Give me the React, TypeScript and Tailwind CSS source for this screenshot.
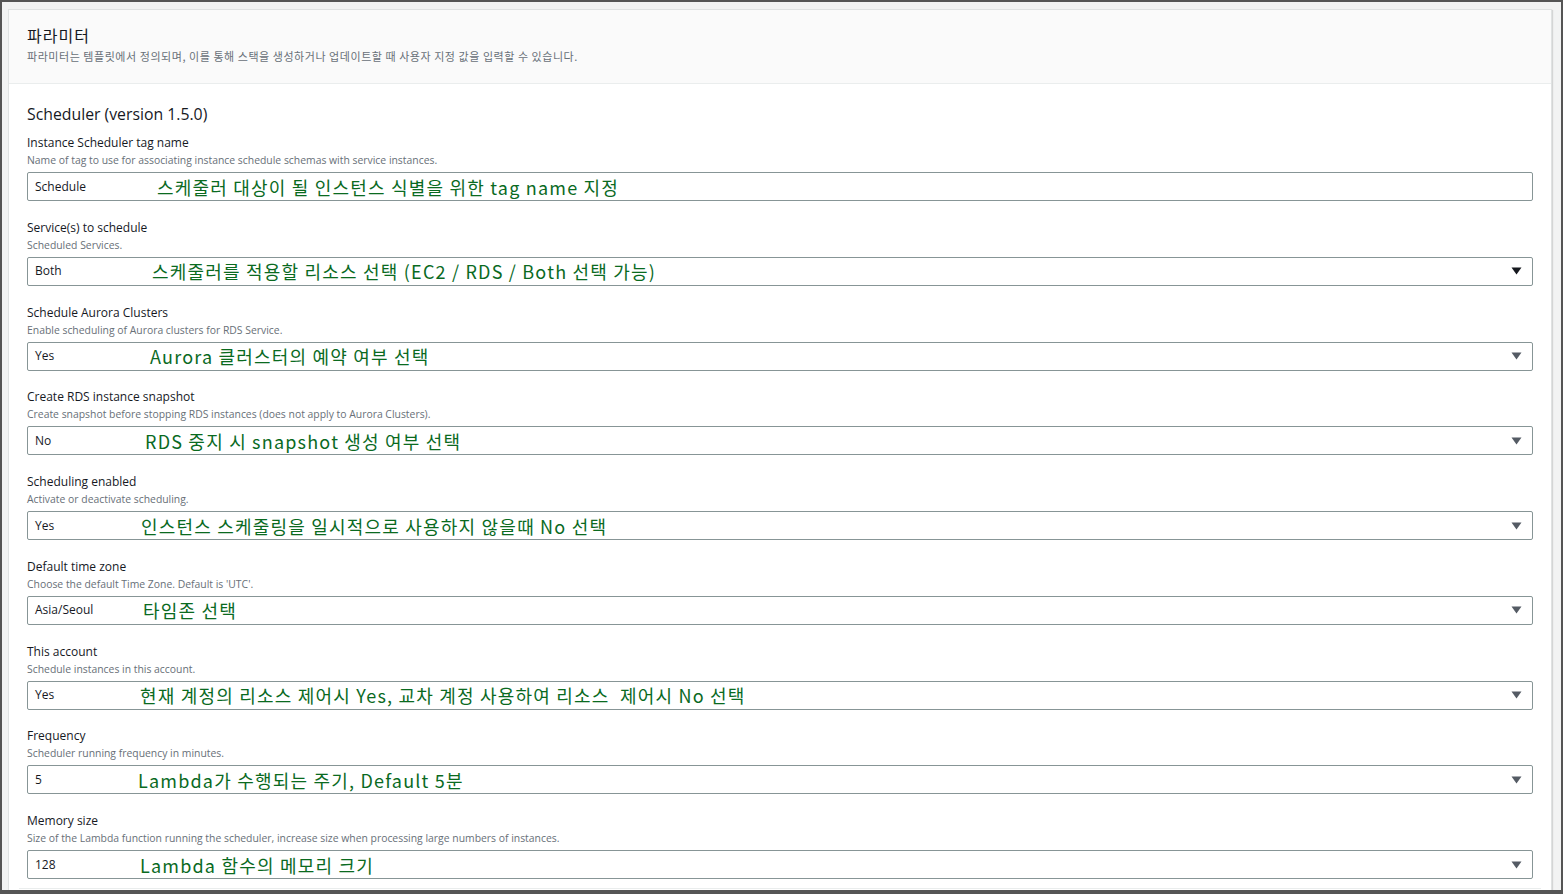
import React from "react";

type Field = {
  label: string;
  desc: string;
  value: string;
  note: string;
  noteLeft: string;
  select: boolean;
  dark?: boolean;
};

const fields: Field[] = [
  {
    label: "Instance Scheduler tag name",
    desc: "Name of tag to use for associating instance schedule schemas with service instances.",
    value: "Schedule",
    note: "스케줄러 대상이 될 인스턴스 식별을 위한 tag name 지정",
    noteLeft: "left-[129px]",
    select: false,
  },
  {
    label: "Service(s) to schedule",
    desc: "Scheduled Services.",
    value: "Both",
    note: "스케줄러를 적용할 리소스 선택 (EC2 / RDS / Both 선택 가능)",
    noteLeft: "left-[124px]",
    select: true,
    dark: true,
  },
  {
    label: "Schedule Aurora Clusters",
    desc: "Enable scheduling of Aurora clusters for RDS Service.",
    value: "Yes",
    note: "Aurora 클러스터의 예약 여부 선택",
    noteLeft: "left-[122px]",
    select: true,
  },
  {
    label: "Create RDS instance snapshot",
    desc: "Create snapshot before stopping RDS instances (does not apply to Aurora Clusters).",
    value: "No",
    note: "RDS 중지 시 snapshot 생성 여부 선택",
    noteLeft: "left-[117px]",
    select: true,
  },
  {
    label: "Scheduling enabled",
    desc: "Activate or deactivate scheduling.",
    value: "Yes",
    note: "인스턴스 스케줄링을 일시적으로 사용하지 않을때 No 선택",
    noteLeft: "left-[113px]",
    select: true,
  },
  {
    label: "Default time zone",
    desc: "Choose the default Time Zone. Default is 'UTC'.",
    value: "Asia/Seoul",
    note: "타임존 선택",
    noteLeft: "left-[115px]",
    select: true,
  },
  {
    label: "This account",
    desc: "Schedule instances in this account.",
    value: "Yes",
    note: "현재 계정의 리소스 제어시 Yes, 교차 계정 사용하여 리소스  제어시 No 선택",
    noteLeft: "left-[112px]",
    select: true,
  },
  {
    label: "Frequency",
    desc: "Scheduler running frequency in minutes.",
    value: "5",
    note: "Lambda가 수행되는 주기, Default 5분",
    noteLeft: "left-[110px]",
    select: true,
  },
  {
    label: "Memory size",
    desc: "Size of the Lambda function running the scheduler, increase size when processing large numbers of instances.",
    value: "128",
    note: "Lambda 함수의 메모리 크기",
    noteLeft: "left-[112px]",
    select: true,
  },
];

function Caret({ dark }: { dark?: boolean }) {
  return (
    <svg width="11" height="8" viewBox="0 0 11 8" className="shrink-0">
      <polygon points="0.5,0.5 10.5,0.5 5.5,7.5" fill={dark ? "#16191f" : "#545b64"} />
    </svg>
  );
}

function FieldRow({ f }: { f: Field }) {
  return (
    <div className="flex flex-col">
      <div className="pt-[1px] text-[12px] leading-[16px] text-[#16191f]">{f.label}</div>
      <div className="mt-[2px] text-[10.4px] leading-[14px] text-[#687078]">{f.desc}</div>
      <div className="relative mt-[5px] flex h-[29px] items-center justify-between rounded-[2px] border border-[#879596] bg-white pl-[7px] pr-[10px]">
        <span className="text-[12px] text-[#16191f]">{f.value}</span>
        {f.select && <Caret dark={f.dark} />}
        <span
          className={`absolute top-1/2 -translate-y-1/2 whitespace-pre text-[18px] leading-[22px] tracking-[1.2px] text-[#0a6a1f] ${f.noteLeft}`}
          style={{ fontFamily: "'Noto Sans CJK KR', 'Noto Sans', sans-serif" }}
        >
          {f.note}
        </span>
      </div>
    </div>
  );
}

export default function App() {
  return (
    <div
      className="h-[894px] w-full overflow-hidden border-x-2 border-t-2 border-b-[4px] border-[#555555] bg-[#f2f3f3] pl-[6px] pr-[9px] pt-[7px]"
      style={{ fontFamily: "'Open Sans', 'Noto Sans CJK KR', sans-serif" }}
    >
      <div className="border border-[#dfe2e2] bg-white shadow-[1px_1px_1px_rgba(0,0,0,0.12)]">
        <div className="border-b border-[#eaeded] bg-[#fafafa] px-[18px] pb-[20px] pt-[14px]">
          <div
            className="text-[16px] leading-[22px] tracking-[1px] text-[#16191f]"
            style={{ fontFamily: "'Noto Sans CJK KR', sans-serif" }}
          >
            파라미터
          </div>
          <div
            className="mt-[3px] text-[11px] leading-[14px] tracking-[0.55px] text-[#687078]"
            style={{ fontFamily: "'Noto Sans CJK KR', sans-serif" }}
          >
            파라미터는 템플릿에서 정의되며, 이를 통해 스택을 생성하거나 업데이트할 때 사용자 지정 값을 입력할 수 있습니다.
          </div>
        </div>
        <div className="px-[18px] pt-[20px]">
          <div className="text-[15.8px] leading-[20px] text-[#16191f]">Scheduler (version 1.5.0)</div>
          <div className="mt-[10px] flex flex-col gap-[17.75px]">
            {fields.map((f) => (
              <FieldRow key={f.label} f={f} />
            ))}
          </div>
        </div>
        <div className="mx-[10px] mt-[9px] border-t border-[#eaeded] pb-[20px]" />
      </div>
    </div>
  );
}
